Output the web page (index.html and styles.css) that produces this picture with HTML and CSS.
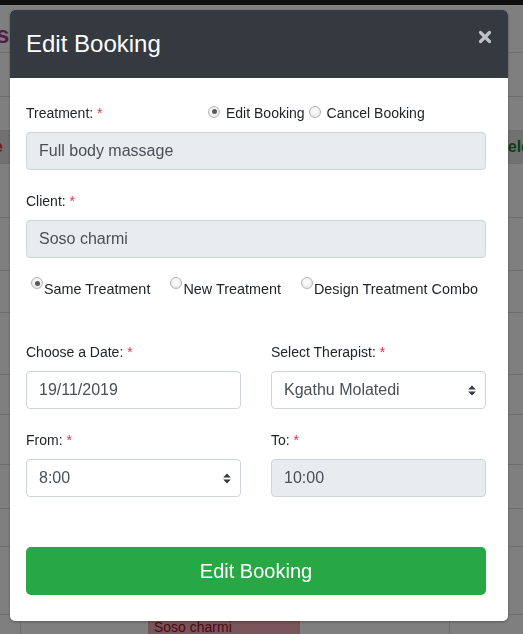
FILE: index.html
```html
<!DOCTYPE html>
<html>
<head>
<meta charset="utf-8">
<link rel="stylesheet" href="styles.css">
</head>
<body>
<div class="page">
  <div class="topbar"></div>
  <h2 class="page-title">Bookings</h2>
  <div class="table">
    <div class="row r1"></div>
    <div class="row r2"></div>
    <div class="row band"><span class="t-red">e</span><span class="t-green">Welc</span></div>
    <div class="row r3"></div>
    <div class="row r4"></div>
    <div class="row r5"></div>
    <div class="row r6"></div>
    <div class="row r7"></div>
    <div class="row r8"></div>
    <div class="row r9"></div>
    <div class="row r10"></div>
    <div class="row r11"></div>
    <div class="row last">
      <div class="cell c1"></div>
      <div class="cell c2"></div>
      <div class="cell c3"><span class="appt">Soso charmi</span></div>
      <div class="cell c4"></div>
      <div class="cell c5"></div>
    </div>
  </div>
</div>

<div class="backdrop"></div>

<div class="modal">
  <div class="modal-header">
    <h4 class="modal-title">Edit Booking</h4>
    <button class="close" type="button" aria-label="Close">
      <svg width="14" height="14" viewBox="0 0 14 14"><path d="M2.5 2.5 L11.5 11.5 M11.5 2.5 L2.5 11.5" stroke="#bfc1c4" stroke-width="3.2" stroke-linecap="round"/></svg>
    </button>
  </div>
  <div class="modal-body">
    <div class="group">
      <div class="label-row">
        <label class="lbl lbl-fixed">Treatment: <span class="req">*</span></label>
        <span class="radio-inline"><span class="radio checked"></span><span class="rtext">Edit Booking</span></span>
        <span class="radio-inline second"><span class="radio"></span><span class="rtext">Cancel Booking</span></span>
      </div>
      <div class="input disabled">Full body massage</div>
    </div>
    <div class="group">
      <label class="lbl">Client: <span class="req">*</span></label>
      <div class="input disabled">Soso charmi</div>
    </div>
    <div class="choice-row">
      <span class="choice"><span class="radio checked"></span>Same Treatment</span>
      <span class="choice"><span class="radio"></span>New Treatment</span>
      <span class="choice"><span class="radio"></span>Design Treatment Combo</span>
    </div>
    <div class="grid">
      <div class="group">
        <label class="lbl">Choose a Date: <span class="req">*</span></label>
        <div class="input">19/11/2019</div>
      </div>
      <div class="group">
        <label class="lbl">Select Therapist: <span class="req">*</span></label>
        <div class="input select">Kgathu Molatedi
          <svg class="caret" width="8" height="11" viewBox="0 0 8 11"><path d="M4 0.5 L7.8 4.5 L0.2 4.5 Z M4 10.5 L7.8 6.5 L0.2 6.5 Z" fill="#343a40"/></svg>
        </div>
      </div>
      <div class="group">
        <label class="lbl">From: <span class="req">*</span></label>
        <div class="input select">8:00
          <svg class="caret" width="8" height="11" viewBox="0 0 8 11"><path d="M4 0.5 L7.8 4.5 L0.2 4.5 Z M4 10.5 L7.8 6.5 L0.2 6.5 Z" fill="#343a40"/></svg>
        </div>
      </div>
      <div class="group">
        <label class="lbl">To: <span class="req">*</span></label>
        <div class="input disabled">10:00</div>
      </div>
    </div>
    <button class="btn-submit" type="button">Edit Booking</button>
  </div>
</div>
</body>
</html>
```
FILE: styles.css
```css
* { box-sizing: border-box; }
html, body { margin: 0; padding: 0; }
body {
  width: 523px;
  height: 634px;
  overflow: hidden;
  background: #ffffff;
  font-family: "Liberation Sans", Arial, sans-serif;
}

/* background page (under the backdrop) */
.page { width: 523px; height: 634px; overflow: hidden; }
.topbar { height: 5px; background: #1e1e1e; }
.page-title {
  margin: 0 0 0 -100px;
  height: 47px;
  padding-top: 16px;
  font-size: 24px;
  line-height: 28px;
  font-weight: bold;
  color: #a23b8f;
}
.table { border-top: 1px solid #dedede; }
.row { border-bottom: 1px solid #dcdcdc; display: flex; justify-content: space-between; align-items: center; }
.r1 { height: 44px; }
.r2 { height: 34px; }
.band { height: 33px; background: #e2e2e2; font-size: 16px; font-weight: bold; }
.t-red { color: #e2364a; margin-left: -6px; }
.t-green { color: #1f7a2a; margin-right: -7px; }
.r3 { height: 54px; }
.r4 { height: 53px; }
.r5 { height: 42px; }
.r6 { height: 62px; }
.r7 { height: 40px; }
.r8 { height: 50px; }
.r9 { height: 44px; }
.r10 { height: 38px; }
.r11 { height: 68px; }
.last { height: 20px; align-items: stretch; justify-content: flex-start; border-bottom: none; }
.cell { border-right: 1px solid #d8d8d8; }
.c1 { width: 21px; }
.c2 { width: 127px; border-right: none; }
.c3 { width: 152px; border-right: none; }
.c3 .appt {
  display: block;
  height: 100%;
  background: #f0a8b6;
  color: #a01020;
  font-size: 14px;
  padding: 3px 6px;
  line-height: 18px;
  white-space: nowrap;
}
.c4 { width: 150px; }
.c5 { flex: 1; border-right: none; }

.backdrop {
  position: fixed;
  inset: 0;
  background: rgba(0, 0, 0, 0.5);
}

/* modal */
.modal {
  position: fixed;
  left: 10px;
  top: 10px;
  width: 498px;
  height: 611px;
  background: #ffffff;
  border-radius: 5px;
  overflow: hidden;
  box-shadow: 0 1px 3px rgba(0, 0, 0, 0.3);
}
.modal-header {
  height: 68px;
  background: #343a40;
  display: flex;
  align-items: center;
  justify-content: space-between;
  padding: 0 16px;
}
.modal-title {
  margin: 0;
  color: #ffffff;
  font-size: 24px;
  font-weight: normal;
  line-height: 36px;
}
.close {
  border: none;
  background: none;
  padding: 0;
  margin: -14px 0 0 0;
  width: 14px;
  height: 14px;
  display: flex;
}

.modal-body { padding: 25px 22px 26px 16px; }
.group { margin-bottom: 21px; }
.lbl {
  display: block;
  font-size: 14px;
  line-height: 21px;
  color: #212529;
  margin-bottom: 8px;
}
.req { color: #dc3545; }
.label-row {
  display: flex;
  align-items: flex-start;
  font-size: 14px;
  line-height: 21px;
  color: #212529;
  margin-bottom: 8px;
  white-space: nowrap;
}
.lbl-fixed { width: 182px; margin-bottom: 0; }
.radio-inline { display: inline-flex; align-items: center; }
.radio-inline .radio { margin-top: -4px; }
.radio-inline .rtext { margin-left: 6px; }
.radio-inline.second { margin-left: 4px; }
.radio-inline.second .rtext { margin-left: 6px; }

.radio {
  display: inline-block;
  width: 12px;
  height: 12px;
  border-radius: 50%;
  border: 1px solid #b4b4b4;
  background: radial-gradient(circle at 50% 40%, #ffffff 0%, #f0f0f0 55%, #dcdcdc 100%);
  position: relative;
  flex: none;
}
.radio.checked::after {
  content: "";
  position: absolute;
  left: 2.5px;
  top: 2.5px;
  width: 5px;
  height: 5px;
  border-radius: 50%;
  background: #5a5a5a;
}

.input {
  height: 38px;
  border: 1px solid #ced4da;
  border-radius: 4px;
  padding: 0 12px;
  font-size: 16px;
  line-height: 36px;
  color: #495057;
  background: #ffffff;
  display: flex;
  align-items: center;
  justify-content: space-between;
}
.input.disabled { background: #e9ecef; }
.caret { margin-right: -3px; }

.choice-row {
  display: flex;
  height: 21px;
  margin: 20px 0 42px 5px;
  font-size: 14.4px;
  line-height: 21px;
  color: #212529;
  white-space: nowrap;
}
.choice { display: inline-flex; align-items: flex-start; margin-right: 20px; flex: none; }
.choice .radio { margin: -2px 1px 0 0; }

.grid {
  display: grid;
  grid-template-columns: 215px 215px;
  column-gap: 30px;
}
.grid .group { margin-bottom: 21px; }
.grid .group:nth-child(n+3) { margin-bottom: 0; }

.btn-submit {
  display: block;
  width: 100%;
  height: 48px;
  margin-top: 50px;
  border: none;
  border-radius: 5px;
  background: #28a745;
  color: #ffffff;
  font-family: "Liberation Sans", Arial, sans-serif;
  font-size: 20px;
  line-height: 48px;
  padding: 0;
}
```
